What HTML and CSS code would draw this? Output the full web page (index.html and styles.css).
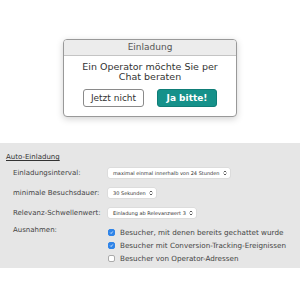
FILE: index.html
```html
<!DOCTYPE html>
<html lang="de">
<head>
    <meta charset="UTF-8">
    <title>Auto-Einladung</title>
    <link rel="stylesheet" href="styles.css">
</head>
<body>

    <!-- Vorschau der Einladung -->
    <section class="preview">
        <div class="invite">
            <div class="invite-head">Einladung</div>
            <p class="invite-text">Ein Operator möchte Sie per<br>Chat beraten</p>
            <div class="invite-buttons">
                <button class="btn btn-no">Jetzt nicht</button>
                <button class="btn btn-yes">Ja bitte!</button>
            </div>
        </div>
    </section>

    <!-- Einstellungen -->
    <section class="settings">
        <h3 class="settings-title">Auto-Einladung</h3>
        <div class="settings-grid">
            <span class="label">Einladungsinterval:</span>
            <span class="select">maximal einmal innerhalb von 24 Stunden
                <svg class="arrows" viewBox="0 0 6 8"><path d="M1 3 L3 1 L5 3 M1 5 L3 7 L5 5"/></svg></span>

            <span class="label">minimale Besuchsdauer:</span>
            <span class="select">30 Sekunden
                <svg class="arrows" viewBox="0 0 6 8"><path d="M1 3 L3 1 L5 3 M1 5 L3 7 L5 5"/></svg></span>

            <span class="label">Relevanz-Schwellenwert:</span>
            <span class="select">Einladung ab Relevanzwert 3
                <svg class="arrows" viewBox="0 0 6 8"><path d="M1 3 L3 1 L5 3 M1 5 L3 7 L5 5"/></svg></span>

            <span class="label label-top">Ausnahmen:</span>
            <div class="checks">
                <label class="check"><span class="box on"><svg viewBox="0 0 8 8"><path d="M2 4.2 L3.4 5.6 L6 2.4"/></svg></span>Besucher, mit denen bereits gechattet wurde</label>
                <label class="check"><span class="box on"><svg viewBox="0 0 8 8"><path d="M2 4.2 L3.4 5.6 L6 2.4"/></svg></span>Besucher mit Conversion-Tracking-Ereignissen</label>
                <label class="check"><span class="box"></span>Besucher von Operator-Adressen</label>
            </div>
        </div>
    </section>

</body>
</html>
```

FILE: styles.css
```css
/* Basic Reset */
* {
    margin: 0;
    padding: 0;
    box-sizing: border-box;
}

body {
    font-family: 'DejaVu Sans', Verdana, sans-serif;
    background-color: #fff;
    color: #333;
    width: 300px;
    height: 300px;
    overflow: hidden;
}

/* Preview */
.preview {
    height: 143px;
    padding-top: 39px;
    display: flex;
    justify-content: center;
    align-items: flex-start;
}

.invite {
    width: 174px;
    height: 78px;
    background-color: #fff;
    border: 1px solid #999;
    border-radius: 4px;
    box-shadow: 0 2px 7px rgba(0, 0, 0, 0.18);
    overflow: hidden;
}

.invite-head {
    height: 16px;
    line-height: 15px;
    background-color: #ececec;
    border-bottom: 1px solid #c4c4c4;
    text-align: center;
    font-size: 9px;
    color: #555;
}

.invite-text {
    margin-top: 6px;
    text-align: center;
    font-size: 9.5px;
    line-height: 9.5px;
    color: #333;
}

.invite-buttons {
    margin-top: 8px;
    display: flex;
    justify-content: center;
    gap: 13px;
}

.btn {
    height: 18px;
    width: 61px;
    font-family: 'DejaVu Sans', Verdana, sans-serif;
    font-size: 9px;
    border-radius: 3px;
    cursor: pointer;
}

.btn-no {
    background-color: #fff;
    border: 1px solid #8a8a8a;
    color: #333;
}

.btn-yes {
    width: 60px;
    background-color: #15918a;
    border: 1px solid #0f7d77;
    color: #fff;
    font-weight: bold;
}

/* Settings */
.settings {
    height: 125px;
    background-color: #e6e6e6;
    padding: 9px 0 0 6px;
    font-size: 7px;
    color: #444;
}

.settings-title {
    font-size: 7px;
    font-weight: normal;
    line-height: 10px;
    text-decoration: underline;
    color: #333;
}

.settings-grid {
    display: grid;
    grid-template-columns: 95px auto;
    grid-auto-rows: 20px;
    align-items: center;
    justify-items: start;
    padding-left: 7px;
    margin-top: 1px;
}

.label {
    white-space: nowrap;
}

.label-top {
    align-self: start;
    padding-top: 3px;
}

.select {
    display: flex;
    align-items: center;
    gap: 3px;
    height: 10px;
    padding: 0 3px 0 5px;
    background-color: #fff;
    border-radius: 2px;
    box-shadow: 0 0 0 0.5px #d2d2d2;
    font-size: 5px;
    color: #333;
    white-space: nowrap;
}

.arrows {
    width: 4px;
    height: 6px;
    fill: none;
    stroke: #333;
    stroke-width: 1.2;
}

.checks {
    display: flex;
    flex-direction: column;
    grid-row: span 2;
    align-self: start;
    padding-top: 3px;
}

.check {
    display: flex;
    align-items: center;
    gap: 5px;
    height: 13px;
    font-size: 7.2px;
    white-space: nowrap;
    color: #444;
}

.box {
    width: 7px;
    height: 7px;
    border-radius: 2px;
    background-color: #fff;
    border: 0.5px solid #aaa;
    display: flex;
}

.box.on {
    background-color: #2f84e8;
    border-color: #2f84e8;
}

.box svg {
    width: 100%;
    height: 100%;
    fill: none;
    stroke: #fff;
    stroke-width: 1.2;
}
```
